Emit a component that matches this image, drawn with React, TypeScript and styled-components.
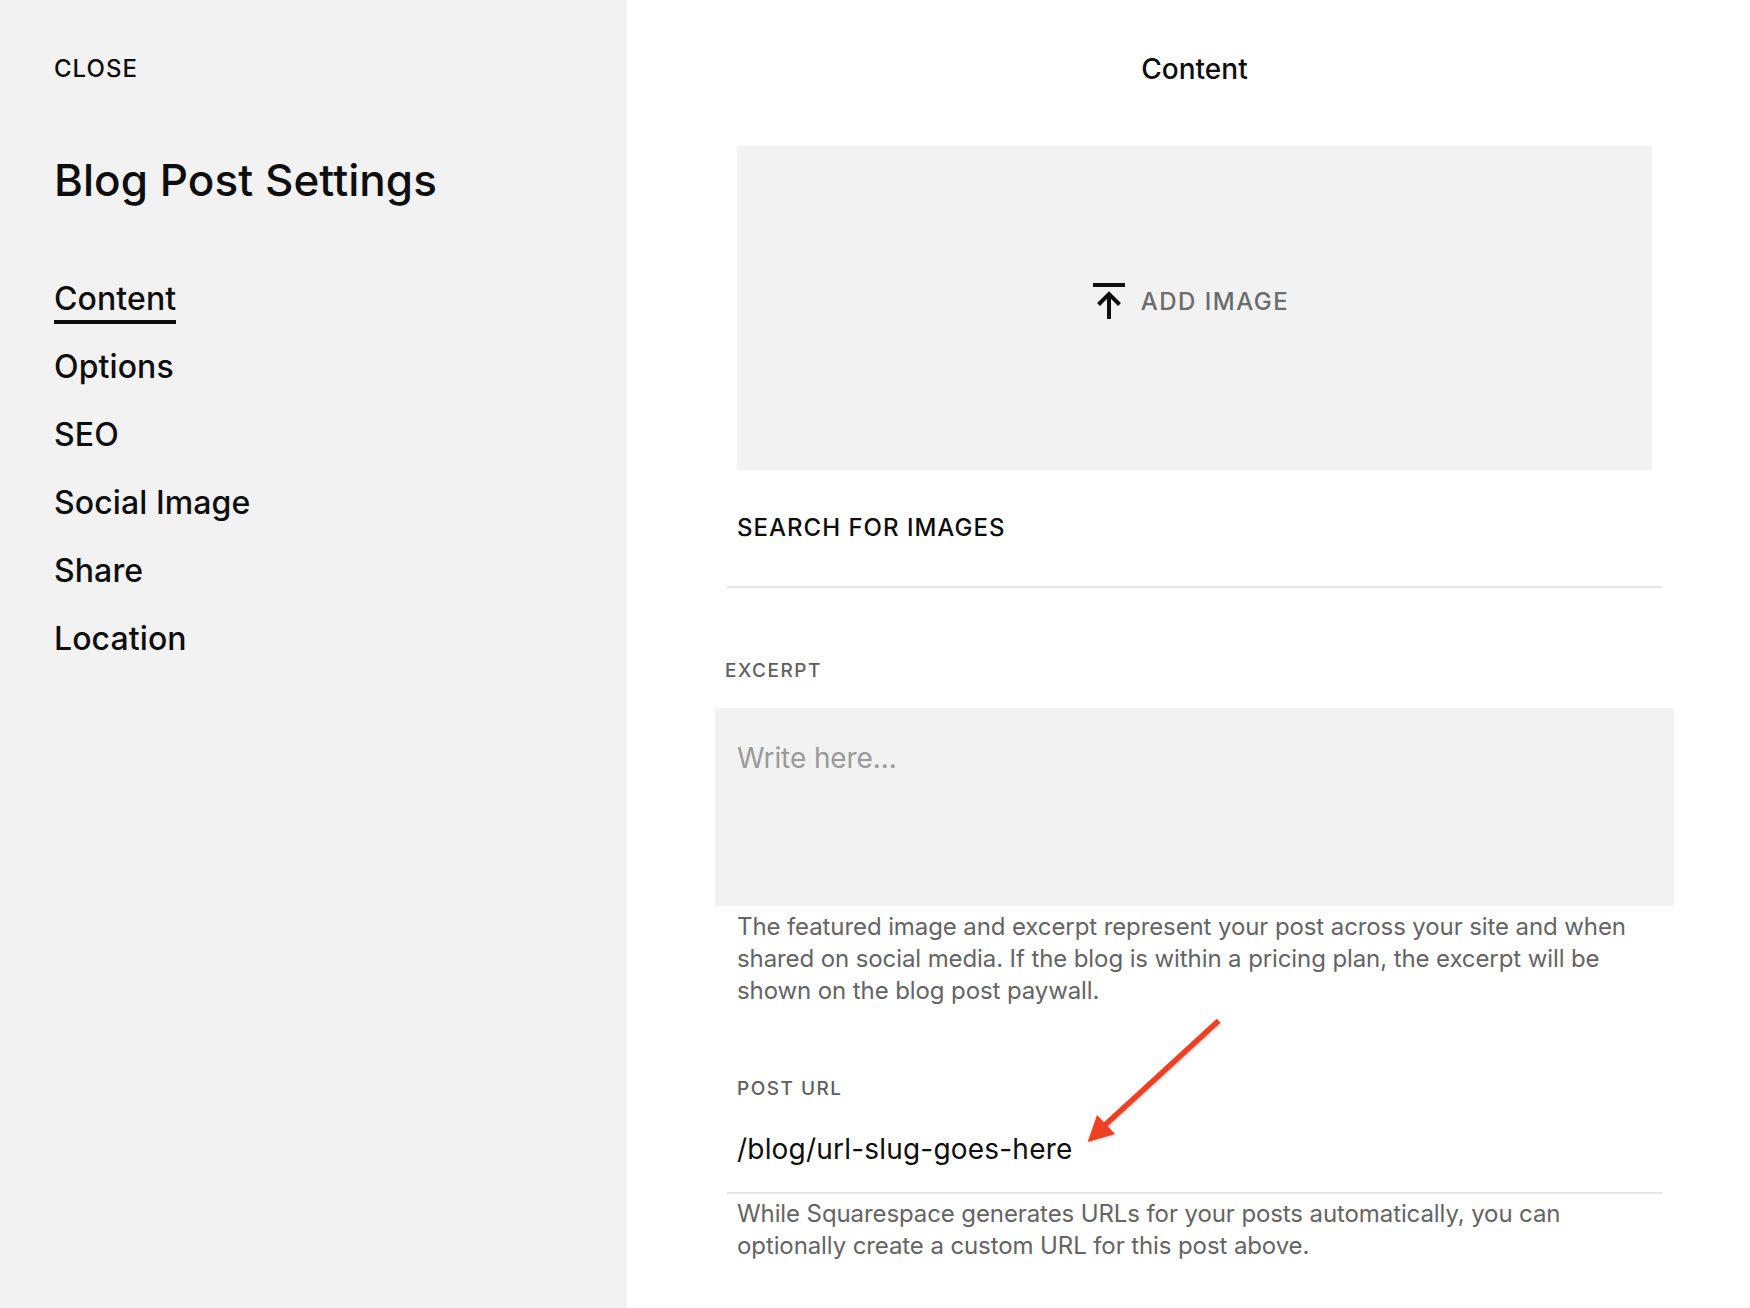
import styled, { createGlobalStyle } from "styled-components";

const GlobalStyle = createGlobalStyle`
    html, body {
        margin: 0;
        padding: 0;
        background: #fff;
    }
    body {
        font-family: Inter, "Liberation Sans", sans-serif;
        color: #0e0e0e;
    }
`;

const Page = styled.div`
    display: grid;
    grid-template-columns: 627px 1fr;
    width: 1750px;
    height: 1308px;
    overflow: hidden;
`;

const Sidebar = styled.aside`
    background: #f2f2f2;
    padding: 54px 0 0 54px;
`;

const Close = styled.div`
    font-size: 24px;
    line-height: 29px;
    font-weight: 500;
    letter-spacing: 1px;
`;

const Title = styled.h1`
    margin: 70px 0 0;
    font-size: 44px;
    line-height: 54px;
    font-weight: 500;
    letter-spacing: 0.05px;
`;

const Nav = styled.nav`
    display: flex;
    flex-direction: column;
    align-items: flex-start;
    gap: 28px;
    margin-top: 72px;
`;

const NavItem = styled.div<{ $active?: boolean }>`
    font-size: 32px;
    line-height: 40px;
    height: 40px;
    font-weight: 500;
    letter-spacing: 0.1px;
    position: relative;
    ${(p) =>
        p.$active &&
        `
        &::after {
            content: "";
            position: absolute;
            left: 0;
            right: 0;
            bottom: -5px;
            height: 4px;
            background: #0e0e0e;
        }
    `}
`;

const Main = styled.main`
    display: flex;
    flex-direction: column;
    padding: 0 76px 0 88px;
`;

const Heading = styled.div`
    margin-top: 52px;
    font-size: 28px;
    line-height: 34px;
    font-weight: 500;
    text-align: center;
`;

const Dropzone = styled.div`
    margin: 60px 22px 0;
    height: 324px;
    box-sizing: border-box;
    padding: 0 7px 14px 0;
    background: #f2f2f2;
    display: flex;
    align-items: center;
    justify-content: center;
    gap: 16px;
`;

const AddLabel = styled.span`
    font-size: 24px;
    font-weight: 500;
    letter-spacing: 1.5px;
    color: #6b6b6b;
`;

const SearchLink = styled.div`
    margin: 43px 22px 0;
    font-size: 24px;
    line-height: 30px;
    font-weight: 500;
    letter-spacing: 1px;
`;

const Rule = styled.div<{ $top: number }>`
    margin: ${(p) => p.$top}px 12px 0;
    height: 2px;
    background: #e6e6e6;
`;

const FieldLabel = styled.div<{ $flush?: boolean; $top: number }>`
    margin: ${(p) => p.$top}px 0 0 ${(p) => (p.$flush ? 10 : 22)}px;
    font-size: 19px;
    line-height: 24px;
    font-weight: 500;
    letter-spacing: 1.5px;
    color: #5f5f5f;
`;

const Excerpt = styled.div`
    margin-top: 25px;
    height: 198px;
    padding: 32px 22px 0;
    box-sizing: border-box;
    background: #f2f2f2;
    font-size: 28px;
    line-height: 36px;
    letter-spacing: -0.1px;
    color: #9a9a9a;
`;

const Help = styled.p<{ $top: number }>`
    margin: ${(p) => p.$top}px 22px 0;
    font-size: 24px;
    line-height: 32px;
    letter-spacing: -0.1px;
    color: #646464;
`;

const UrlRow = styled.div`
    position: relative;
    margin: 30px 22px 0;
    font-size: 28px;
    line-height: 36px;
    letter-spacing: 0.2px;
`;

const Arrow = styled.svg`
    position: absolute;
    left: 349px;
    top: -116px;
    overflow: visible;
    filter: drop-shadow(1px 1px 1px rgba(0, 0, 0, 0.2));
`;

function UploadIcon() {
    return (
        <svg width="32" height="36" viewBox="0 0 32 36" fill="none" stroke="#0e0e0e" strokeWidth="4">
            <path d="M0 2h32" />
            <path d="M16 36V11" />
            <path d="M5.5 21.5L16 11l10.500 10.500" />
        </svg>
    );
}

function App() {
    return (
        <>
            <GlobalStyle />
            <Page>
                <Sidebar>
                    <Close>CLOSE</Close>
                    <Title>Blog Post Settings</Title>
                    <Nav>
                        <NavItem $active>Content</NavItem>
                        <NavItem>Options</NavItem>
                        <NavItem>SEO</NavItem>
                        <NavItem>Social Image</NavItem>
                        <NavItem>Share</NavItem>
                        <NavItem>Location</NavItem>
                    </Nav>
                </Sidebar>
                <Main>
                    <Heading>Content</Heading>
                    <Dropzone>
                        <UploadIcon />
                        <AddLabel>ADD IMAGE</AddLabel>
                    </Dropzone>
                    <SearchLink>SEARCH FOR IMAGES</SearchLink>
                    <Rule $top={43} />
                    <FieldLabel $flush $top={71}>EXCERPT</FieldLabel>
                    <Excerpt>Write here...</Excerpt>
                    <Help $top={5}>
                        The featured image and excerpt represent your post across your site and when shared on social
                        media. If the blog is within a pricing plan, the excerpt will be shown on the blog post paywall.
                    </Help>
                    <FieldLabel $top={70}>POST URL</FieldLabel>
                    <UrlRow>
                        /blog/url-slug-goes-here
                        <Arrow width="134" height="128" viewBox="0 0 134 128" fill="none">
                            <path d="M132.600 5.700L19 110" stroke="#ee4023" strokeWidth="5.500" />
                            <path d="M1.600 127L11 100l18 19z" fill="#ee4023" />
                        </Arrow>
                    </UrlRow>
                    <Rule $top={25} />
                    <Help $top={4}>
                        While Squarespace generates URLs for your posts automatically, you can optionally create a
                        custom URL for this post above.
                    </Help>
                </Main>
            </Page>
        </>
    );
}

export default App;
